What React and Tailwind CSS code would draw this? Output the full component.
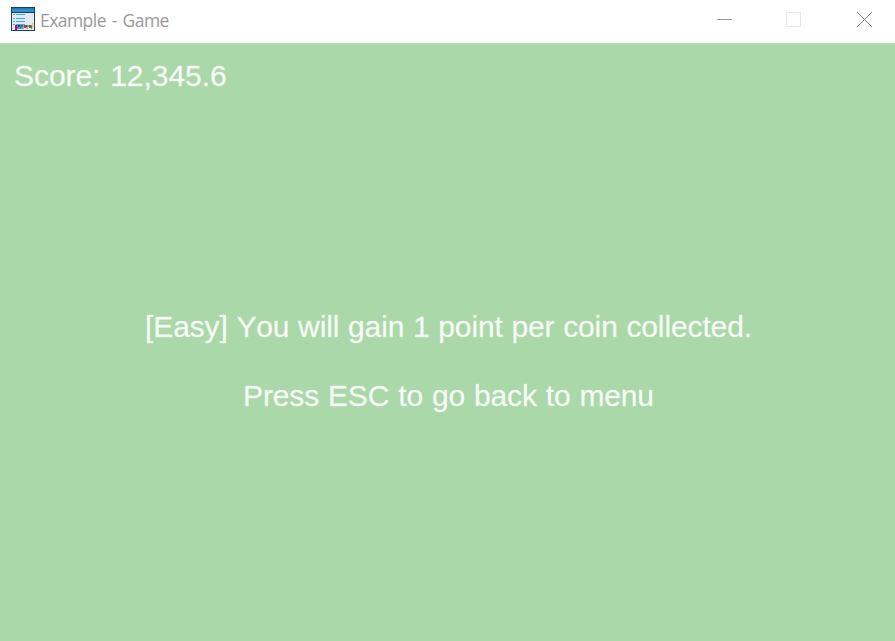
const letters = [
  [4, 18, 2, 5, '#8a1f8f'], [6, 18, 1, 4, '#d23fb4'], [7, 18, 2, 2, '#4a3a70'], [7, 20, 2, 2, '#20b8b0'],
  [9, 18, 1, 4, '#1f9c9a'], [10, 18, 2, 2, '#4d6a6e'], [10, 20, 2, 2, '#7f9ea0'], [12, 18, 1, 4, '#c79ab0'], [13, 18, 2, 3, '#6b5a50'],
  [15, 18, 1, 2, '#5a4658'], [15, 20, 2, 2, '#d0a090'], [16, 18, 2, 2, '#a08a7c'], [18, 18, 2, 3, '#6b605c'], [20, 18, 1, 4, '#8d7d28'],
  [21, 16, 1, 5, '#e6d23a'],
];

function WindowIcon() {
  return (
    <svg className="ml-[11px] mt-[7px] shrink-0" width="24" height="24" viewBox="0 0 24 24" shapeRendering="crispEdges">
      <rect width="24" height="24" fill="#1b3a70" />
      <rect x="1" y="1" width="22" height="4" fill="#2b93c8" />
      <rect x="1" y="1" width="22" height="1" fill="#2379ae" />
      <rect x="1" y="6" width="22" height="17" fill="#e6e8f8" />
      {[7, 11, 14, 17].map((y) => (
        <g key={y} fill="#35b4e4">
          <rect x="2" y={y} width="2" height="1" />
          <rect x="5" y={y} width="9" height="1" />
        </g>
      ))}
      {letters.map(([x, y, w, h, fill]) => (
        <rect key={`${x}-${y}`} x={x} y={y} width={w} height={h} fill={fill} />
      ))}
    </svg>
  );
}

export default function App() {
  return (
    <div className="flex h-[641px] w-[895px] flex-col overflow-hidden bg-[#aad8a8]">
      <header className="flex h-[43px] items-start bg-white">
        <WindowIcon />
        <span className="ml-[5px] mt-[8px] whitespace-pre font-['Open_Sans',sans-serif] text-[17.5px] leading-[24px] tracking-[-0.55px] [word-spacing:1.8px] text-[#999]">Example - Game</span>
        <svg className="ml-auto" width="195" height="43" viewBox="0 0 195 43" fill="none">
          <path d="M17 19.5H32" stroke="#999" />
          <rect x="86.500" y="12.500" width="14" height="14" stroke="#e8e8e8" />
          <path d="M157 12L172 27M172 12L157 27" stroke="#888" />
        </svg>
      </header>
      <main className="flex flex-1 flex-col border-t border-[#b3dcb1] font-['Liberation_Sans',Arial,sans-serif] text-[30px] leading-[36px] text-white/90 [-webkit-text-stroke:0.3px_rgba(255,255,255,0.6)]">
        <p className="ml-[14px] mt-[14px] whitespace-pre tracking-[-0.05px] [word-spacing:1.5px]">Score: 12,345.6</p>
        <div className="mt-[215px] flex flex-col items-center gap-[33px] whitespace-pre pl-[2px]">
          <p className="tracking-[-0.12px] [font-kerning:none] [word-spacing:0.5px]">[Easy] You will gain 1 point per coin collected.</p>
          <p className="tracking-[-0.15px] [word-spacing:0.8px]">Press ESC to go back to menu</p>
        </div>
      </main>
    </div>
  );
}
